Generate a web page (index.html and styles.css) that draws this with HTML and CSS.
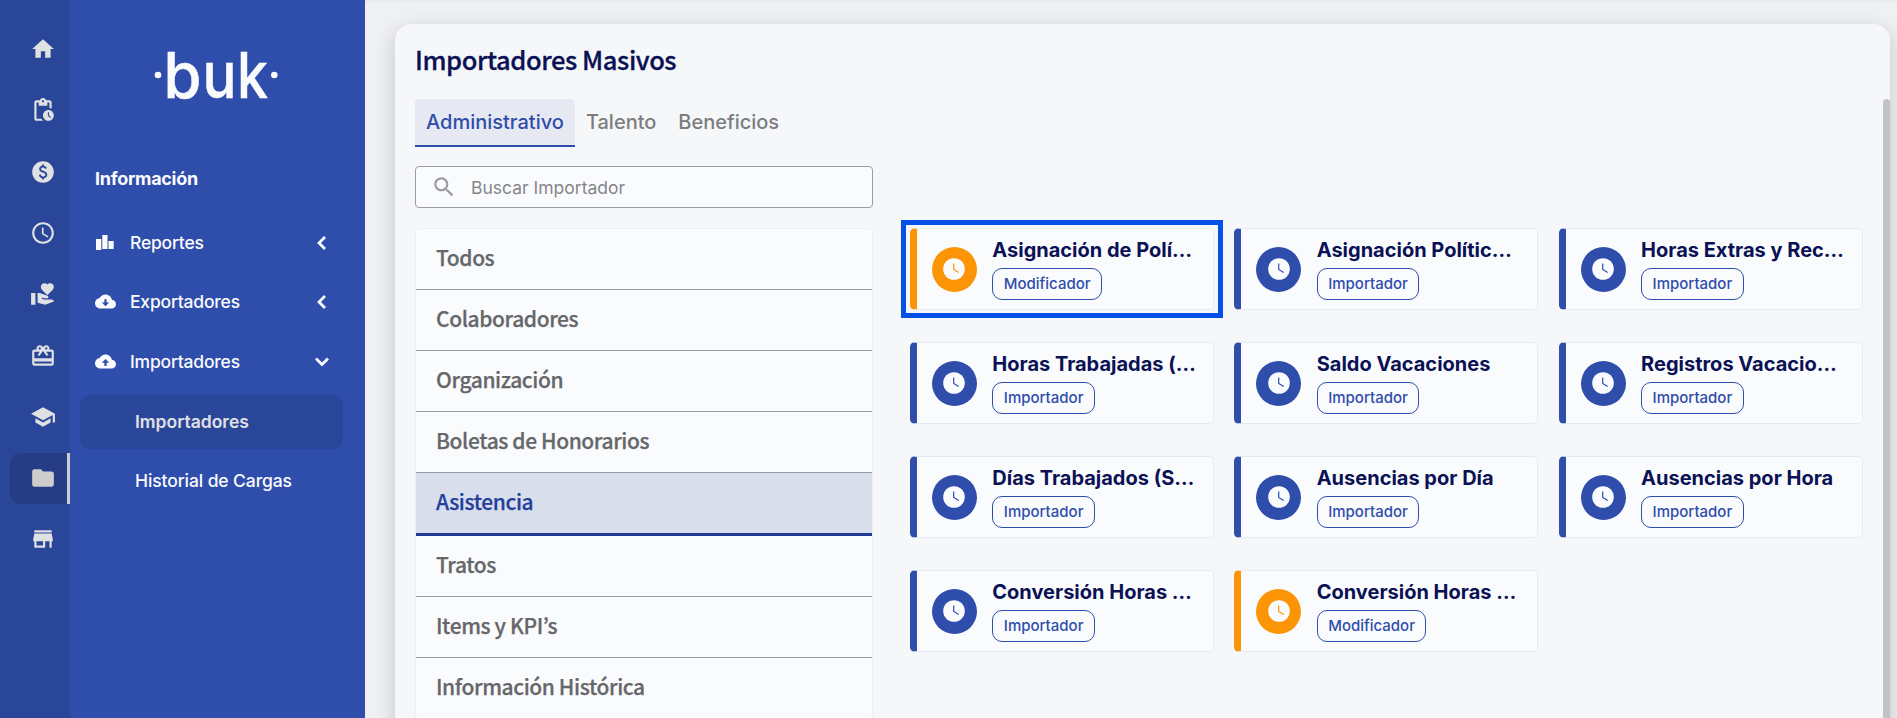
FILE: index.html
```html
<!DOCTYPE html>
<html lang="es">
<head>
<meta charset="utf-8">
<title>Importadores Masivos</title>
<link rel="stylesheet" href="styles.css">
</head>
<body>
<svg class="sprite" aria-hidden="true">
  <symbol id="home" viewBox="0 0 24 24"><path d="M10 20v-6h4v6h5v-8h3L12 3 2 12h3v8z"/></symbol>
  <symbol id="pending" viewBox="0 0 24 24"><path d="M17 12c-2.760 0-5 2.240-5 5s2.240 5 5 5 5-2.240 5-5-2.240-5-5-5zm1.650 7.350L16.500 17.200V14h1v2.790l1.850 1.850-.7.710zM18 3h-3.180C14.400 1.840 13.300 1 12 1s-2.400.84-2.820 2H6c-1.100 0-2 .9-2 2v15c0 1.100.9 2 2 2h6.110c-.59-.57-1.070-1.250-1.420-2H6V5h2v3h8V5h2v5.080c.71.100 1.380.31 2 .6V5c0-1.100-.9-2-2-2zm-6 2c-.55 0-1-.45-1-1s.45-1 1-1 1 .45 1 1-.45 1-1 1z"/></symbol>
  <symbol id="money" viewBox="0 0 24 24"><path d="M12 2C6.480 2 2 6.480 2 12s4.480 10 10 10 10-4.480 10-10S17.520 2 12 2zm.88 15.760V19h-1.750v-1.290c-.74-.18-2.390-.77-3.020-2.960l1.650-.67c.06.22.58 2.090 2.400 2.090.93 0 1.980-.48 1.980-1.610 0-.96-.7-1.460-2.280-2.030-1.100-.39-3.350-1.030-3.350-3.310 0-.1.010-2.400 2.620-2.960V5h1.750v1.240c1.840.32 2.510 1.790 2.660 2.230l-1.580.67c-.11-.35-.59-1.340-1.900-1.340-.7 0-1.810.37-1.810 1.390 0 .95.860 1.310 2.640 1.900 2.400.83 3.010 2.050 3.010 3.450 0 2.630-2.500 3.130-3.020 3.220z"/></symbol>
  <symbol id="clock" viewBox="0 0 24 24"><path d="M11.990 2C6.470 2 2 6.480 2 12s4.470 10 9.990 10C17.520 22 22 17.520 22 12S17.520 2 11.990 2zM12 20c-4.420 0-8-3.580-8-8s3.580-8 8-8 8 3.580 8 8-3.580 8-8 8zm.5-13H11v6l5.250 3.150.75-1.230-4.500-2.670z"/></symbol>
  <symbol id="care" viewBox="0 0 24 24"><path d="M1 11h4v11H1zM16 3.250C16.650 2.490 17.660 2 18.700 2 20.550 2 22 3.450 22 5.300c0 2.270-2.910 4.900-6 7.700-3.090-2.810-6-5.440-6-7.700C10 3.450 11.450 2 13.300 2c1.040 0 2.050.49 2.700 1.250zM20 17h-7l-2.090-.73.33-.94L13 16h2.820c.65 0 1.180-.53 1.180-1.180 0-.49-.31-.93-.77-1.110L8.970 11H7v9.020L14 22l8.010-3c-.01-1.100-.9-2-2.010-2z"/></symbol>
  <symbol id="gift" viewBox="0 0 24 24"><path d="M20 6h-2.180c.11-.31.180-.65.180-1 0-1.660-1.340-3-3-3-1.050 0-1.960.54-2.500 1.350l-.5.670-.5-.68C10.960 2.540 10.050 2 9 2 7.340 2 6 3.340 6 5c0 .35.070.69.180 1H4c-1.110 0-1.990.89-1.990 2L2 19c0 1.110.89 2 2 2h16c1.110 0 2-.89 2-2V8c0-1.110-.89-2-2-2zm-5-2c.55 0 1 .45 1 1s-.45 1-1 1-1-.45-1-1 .45-1 1-1zM9 4c.55 0 1 .45 1 1s-.45 1-1 1-1-.45-1-1 .45-1 1-1zm11 15H4v-2h16v2zm0-5H4V8h5.080L7 10.830 8.620 12 11 8.760l1-1.360 1 1.360L15.380 12 17 10.830 14.920 8H20v6z"/></symbol>
  <symbol id="school" viewBox="0 0 24 24"><path d="M5 13.180v4L12 21l7-3.820v-4L12 17l-7-3.820zM12 3 1 9l11 6 9-4.910V17h2V9L12 3z"/></symbol>
  <symbol id="folder" viewBox="0 0 24 24"><path d="M10 4H4c-1.100 0-1.990.9-1.990 2L2 18c0 1.100.9 2 2 2h16c1.100 0 2-.9 2-2V8c0-1.100-.9-2-2-2h-8l-2-2z"/></symbol>
  <symbol id="store" viewBox="0 0 24 24"><path d="M20 4H4v2h16V4zm1 10v-2l-1-5H4l-1 5v2h1v6h10v-6h4v6h2v-6h1zm-9 4H6v-4h6v4z"/></symbol>
  <symbol id="bars" viewBox="0 0 18 15"><path d="M0 4h5.300v11H0zM6.300 0h5.200v14H6.300zM12.500 6h5.200v8h-5.200z"/></symbol>
  <symbol id="cloud-down" viewBox="0 0 24 24"><path d="M19.350 10.040C18.670 6.590 15.640 4 12 4 9.110 4 6.600 5.640 5.350 8.040 2.340 8.360 0 10.910 0 14c0 3.310 2.690 6 6 6h13c2.760 0 5-2.240 5-5 0-2.640-2.050-4.780-4.650-4.960zM12 17.300l-4.200-4.200h2.900V9.500h2.600v3.600h2.900z"/></symbol>
  <symbol id="cloud-up" viewBox="0 0 24 24"><path d="M19.350 10.040C18.670 6.590 15.640 4 12 4 9.110 4 6.600 5.640 5.350 8.040 2.340 8.360 0 10.910 0 14c0 3.310 2.690 6 6 6h13c2.760 0 5-2.240 5-5 0-2.640-2.050-4.780-4.650-4.960zM12 9.200l4.200 4.200h-2.900V17h-2.600v-3.600H7.800z"/></symbol>
  <symbol id="left" viewBox="0 0 16 16"><path d="M11 2 5 8l6 6" fill="none" stroke="currentColor" stroke-width="2.800"/></symbol>
  <symbol id="down" viewBox="0 0 16 16"><path d="M2 5.500l6 6 6-6" fill="none" stroke="currentColor" stroke-width="2.800"/></symbol>
  <symbol id="search" viewBox="0 0 24 24"><path d="M15.500 14h-.79l-.28-.27C15.410 12.590 16 11.110 16 9.500 16 5.910 13.090 3 9.500 3S3 5.910 3 9.500 5.910 16 9.500 16c1.610 0 3.090-.59 4.230-1.570l.27.28v.79l5 4.990L20.490 19l-4.990-5zm-6 0C7.010 14 5 11.990 5 9.500S7.010 5 9.500 5 14 7.010 14 9.500 11.990 14 9.500 14z"/></symbol>
  <symbol id="dial" viewBox="0 0 22 22"><circle cx="11" cy="11" r="10.800"/><path d="M10.700 5.500v6l5 3" fill="none" stroke="var(--tone)" stroke-width="1.200"/></symbol>
</svg>
<div class="app">
  <nav class="rail">
    <a class="rail-item"><svg><use href="#home"/></svg></a>
    <a class="rail-item"><svg><use href="#pending"/></svg></a>
    <a class="rail-item"><svg><use href="#money"/></svg></a>
    <a class="rail-item"><svg><use href="#clock"/></svg></a>
    <a class="rail-item"><svg><use href="#care"/></svg></a>
    <a class="rail-item"><svg><use href="#gift"/></svg></a>
    <a class="rail-item"><svg><use href="#school"/></svg></a>
    <a class="rail-item active"><svg><use href="#folder"/></svg></a>
    <a class="rail-item"><svg><use href="#store"/></svg></a>
  </nav>
  <aside class="sidebar">
    <svg class="logo" viewBox="0 0 126 60">
      <circle cx="4" cy="29" r="3.300"/>
      <text x="9.500" y="52" textLength="38" lengthAdjust="spacingAndGlyphs">b</text>
      <text x="48.500" y="52" textLength="34" lengthAdjust="spacingAndGlyphs">u</text>
      <text x="83" y="52" textLength="31" lengthAdjust="spacingAndGlyphs">k</text>
      <circle cx="120.300" cy="29" r="3.300"/>
    </svg>
    <h2 class="side-title">Información</h2>
    <a class="side-item"><svg class="side-icon bars"><use href="#bars"/></svg><span>Reportes</span><svg class="chevron"><use href="#left"/></svg></a>
    <a class="side-item"><svg class="side-icon"><use href="#cloud-down"/></svg><span>Exportadores</span><svg class="chevron"><use href="#left"/></svg></a>
    <a class="side-item"><svg class="side-icon"><use href="#cloud-up"/></svg><span>Importadores</span><svg class="chevron"><use href="#down"/></svg></a>
    <a class="sub-item active">Importadores</a>
    <a class="sub-item">Historial de Cargas</a>
  </aside>
  <main class="main">
    <section class="panel">
      <h1 class="title">Importadores Masivos</h1>
      <div class="tabs"><a class="tab active">Administrativo</a><a class="tab">Talento</a><a class="tab">Beneficios</a></div>
      <div class="search"><svg><use href="#search"/></svg><span>Buscar Importador</span></div>
      <div class="columns">
        <div class="list">
          <a class="row">Todos</a>
          <a class="row">Colaboradores</a>
          <a class="row">Organización</a>
          <a class="row">Boletas de Honorarios</a>
          <a class="row active">Asistencia</a>
          <a class="row">Tratos</a>
          <a class="row">Items y KPI’s</a>
          <a class="row">Información Histórica</a>
        </div>
        <div class="cards">
          <article class="card modifier selected"><i class="badge"><svg><use href="#dial"/></svg></i><div class="info"><h3>Asignación de Polí…</h3><span class="pill">Modificador</span></div></article>
          <article class="card"><i class="badge"><svg><use href="#dial"/></svg></i><div class="info"><h3>Asignación Polític…</h3><span class="pill">Importador</span></div></article>
          <article class="card"><i class="badge"><svg><use href="#dial"/></svg></i><div class="info"><h3>Horas Extras y Rec…</h3><span class="pill">Importador</span></div></article>
          <article class="card"><i class="badge"><svg><use href="#dial"/></svg></i><div class="info"><h3>Horas Trabajadas (…</h3><span class="pill">Importador</span></div></article>
          <article class="card"><i class="badge"><svg><use href="#dial"/></svg></i><div class="info"><h3>Saldo Vacaciones</h3><span class="pill">Importador</span></div></article>
          <article class="card"><i class="badge"><svg><use href="#dial"/></svg></i><div class="info"><h3>Registros Vacacio…</h3><span class="pill">Importador</span></div></article>
          <article class="card"><i class="badge"><svg><use href="#dial"/></svg></i><div class="info"><h3>Días Trabajados (S…</h3><span class="pill">Importador</span></div></article>
          <article class="card"><i class="badge"><svg><use href="#dial"/></svg></i><div class="info"><h3>Ausencias por Día</h3><span class="pill">Importador</span></div></article>
          <article class="card"><i class="badge"><svg><use href="#dial"/></svg></i><div class="info"><h3>Ausencias por Hora</h3><span class="pill">Importador</span></div></article>
          <article class="card"><i class="badge"><svg><use href="#dial"/></svg></i><div class="info"><h3>Conversión Horas …</h3><span class="pill">Importador</span></div></article>
          <article class="card modifier"><i class="badge"><svg><use href="#dial"/></svg></i><div class="info"><h3>Conversión Horas …</h3><span class="pill">Modificador</span></div></article>
        </div>
      </div>
      <div class="scrollbar"></div>
    </section>
  </main>
</div>
</body>
</html>
```

FILE: styles.css
```css
* { box-sizing: border-box; }
body { margin: 0; overflow: hidden; font-family: Inter, "Liberation Sans", sans-serif; }
h1, h2, h3 { margin: 0; }
svg { fill: currentColor; flex: none; display: block; }
.sprite { display: none; }
.app { display: flex; width: 1897px; height: 718px; overflow: hidden; background: #eff0f2; }

.rail { width: 70px; padding: 23.600px 0 0 10px; background: #2a4699; color: #e0e1e3; display: flex; flex-direction: column; gap: 10.3px; flex: none; }
.rail-item { height: 51px; flex: none; display: flex; align-items: center; padding-left: 19.500px; border-radius: 10px 0 0 10px; }
.rail-item svg { width: 26px; height: 26px; }
.rail-item.active { background: #263d86; border-right: 3px solid #cccdcf; color: #cdcdcd; }

.sidebar { width: 295px; flex: none; background: #2f4dab; color: #fafbfd; padding: 46px 22px 0 10px; display: flex; flex-direction: column; }
.logo { width: 126px; height: 60px; margin-left: 74px; overflow: visible; }
.logo text { font: 500 63.500px Inter, sans-serif; stroke: currentColor; stroke-width: .5px; }
.side-title { margin: 59px 0 0 15px; font-size: 18px; font-weight: 700; line-height: 28px; letter-spacing: -.3px; }
.side-item { height: 59.300px; display: flex; align-items: center; padding: 0 13px 0 15px; font-size: 17.500px; font-weight: 500; letter-spacing: -.2px; }
.side-title + .side-item { margin-top: 20px; }
.side-icon { width: 21px; height: 21px; margin-right: 14px; }
.bars { width: 18px; height: 15px; margin: 0 16px 0 1px; }
.chevron { width: 16px; height: 16px; margin-left: auto; }
.sub-item { height: 54px; line-height: 54px; padding-left: 55px; font-size: 17.500px; font-weight: 500; letter-spacing: -.1px; border-radius: 10px; margin-bottom: 5px; }
.side-item + .sub-item { margin-top: 4px; }
.sub-item.active { background: #2a4699; color: #e0e1e4; font-weight: 600; letter-spacing: 0; }

.main { flex: 1; padding: 24px 7px 0 30px; box-shadow: inset 0 3px 4px -3px #0001; }
.panel { position: relative; height: 760px; padding: 16px 27px 0 20px; background: #f6f7f9; border-radius: 16px; box-shadow: 0 6px 20px #0000002e; }
.title { color: #0a1154; font: 500 25.500px/38px "Noto Sans CJK JP", sans-serif; letter-spacing: -.42px; -webkit-text-stroke: .3px; }
.tabs { display: flex; margin-top: 21px; height: 48px; }
.tab { padding: 0 11px; line-height: 46px; font-size: 20px; font-weight: 500; color: #7b7d80; }
.tab.active { background: #e7e9f2; color: #2f4dab; border-bottom: 2px solid #2f4dab; border-radius: 4px 4px 0 0; }
.search { width: 458px; height: 42px; margin-top: 19px; border: 1px solid #9c9da0; border-radius: 4px; background: #fafbfd; display: flex; align-items: center; padding-left: 15px; gap: 14px; color: #858689; font-size: 17.500px; }
.search svg { width: 26px; height: 26px; color: #9a9c9f; }
.columns { display: flex; gap: 36.800px; margin-top: 20px; }
.list { width: 458px; flex: none; border: 1px solid #eceef2; border-radius: 4px; background: #fafbfd; display: flex; flex-direction: column; align-self: flex-start; }
.row { height: 61px; line-height: 56px; padding-left: 20px; border-bottom: 1px solid #9c9da0; color: #66676a; font-family: "Noto Sans CJK JP", sans-serif; font-size: 21px; font-weight: 500; letter-spacing: -.4px; -webkit-text-stroke: .25px; }
.row.active { height: 63px; background: #d9deed; border-bottom: 3px solid #203b94; color: #263f9b; }
.cards { flex: 1; display: grid; grid-template-columns: repeat(3, 304px); grid-auto-rows: 82px; gap: 32px 20.400px; align-content: start; }
.card { --tone: #2f4dab; position: relative; display: flex; align-items: center; gap: 15.500px; padding-left: 15px; border: 1px solid #e7e9f4; border-left: 7px solid var(--tone); border-radius: 5px; background: #fafbfd; }
.card.modifier { --tone: #fb9505; }
.card.selected::after { content: ""; position: absolute; inset: -9px -10px -9px -16px; border: 5px solid #0550e6; }
.badge { width: 45px; height: 45px; flex: none; border-radius: 50%; background: var(--tone); color: #fafbfd; display: grid; place-items: center; }
.badge svg { width: 22px; height: 22px; }
.info { display: flex; flex-direction: column; align-items: flex-start; gap: 6px; }
.info h3 { color: #0a1154; font-size: 20px; font-weight: 700; line-height: 24px; white-space: nowrap; }
.pill { height: 32px; line-height: 30px; padding: 0 10.500px; border: 1px solid #2f4dab; border-radius: 10px; color: #2f4dab; font-size: 15px; font-weight: 500; }
.scrollbar { position: absolute; top: 75px; right: 0; bottom: 0; width: 7px; border-radius: 4px; background: #c1c2c4; }
```
